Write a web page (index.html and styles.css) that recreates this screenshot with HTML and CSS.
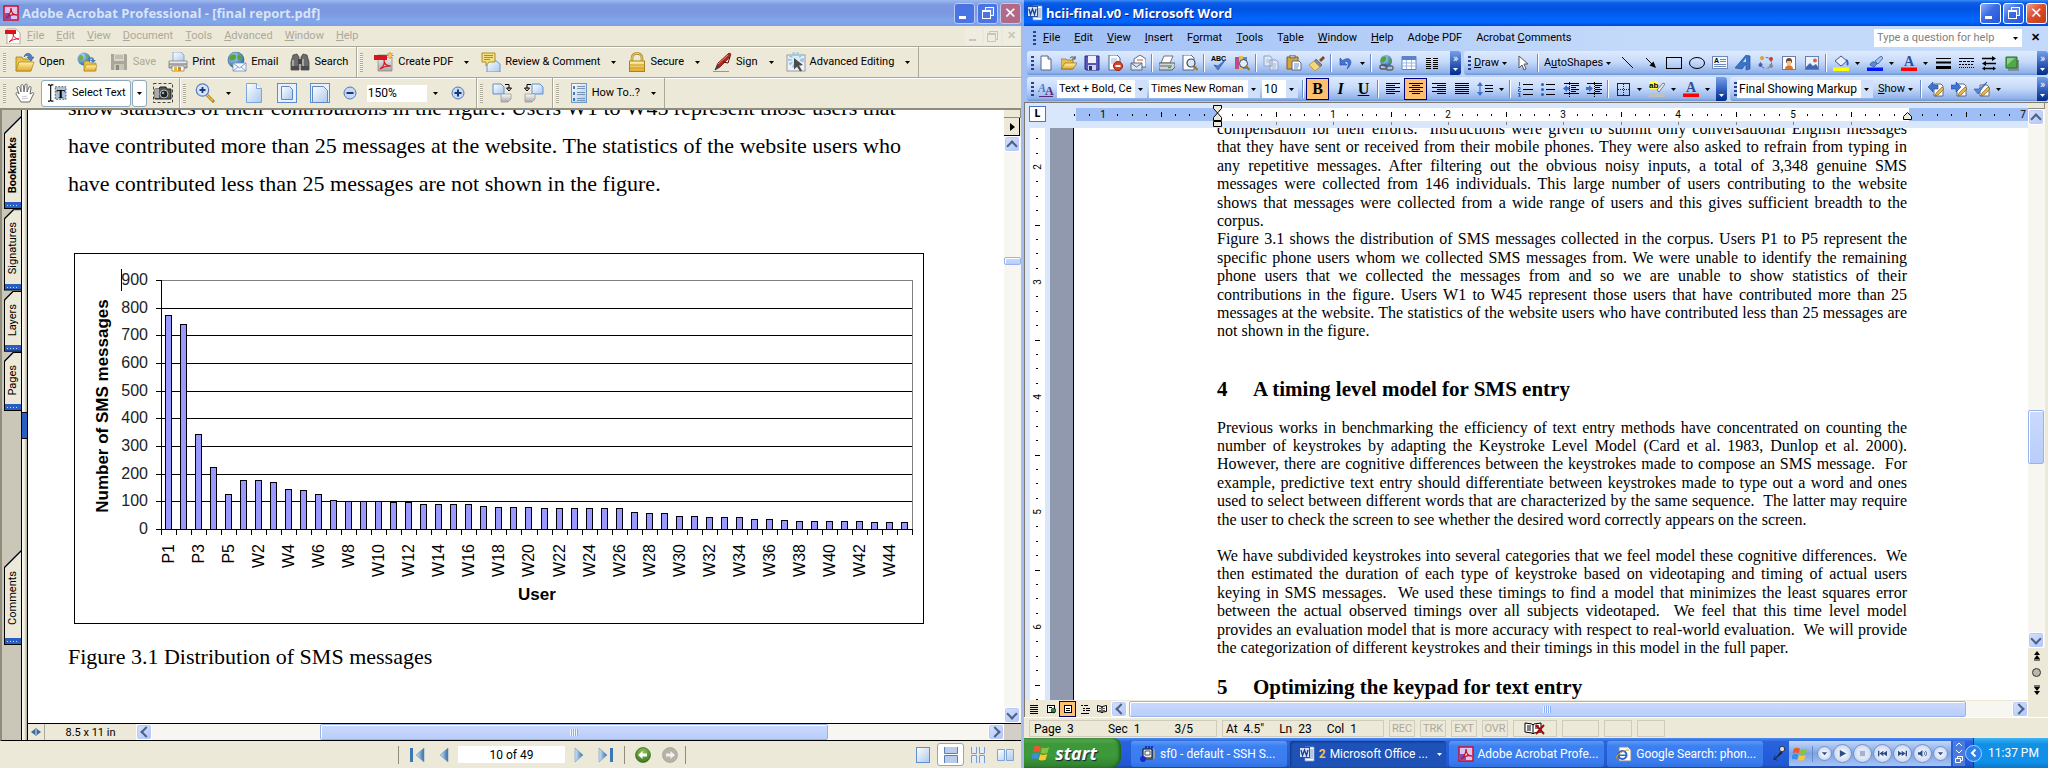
FILE: index.html
```html
<!DOCTYPE html>
<html lang="en">
<head>
<meta charset="utf-8">
<meta name="viewport" content="width=device-width, initial-scale=1.0">
<title>Desktop</title>
<link rel="stylesheet" href="styles.css">
</head>
<body>

<!-- gradients used by the icons -->
<svg class="gradients" aria-hidden="true">
<defs>
<linearGradient id="gy" x1="0" y1="0" x2="0" y2="1"><stop offset="0" stop-color="#fff3a8"/><stop offset="1" stop-color="#e0a92a"/></linearGradient>
<linearGradient id="gb" x1="0" y1="0" x2="1" y2="1"><stop offset="0" stop-color="#ffffff"/><stop offset="1" stop-color="#a9c8ee"/></linearGradient>
<linearGradient id="gg" x1="0" y1="0" x2="0" y2="1"><stop offset="0" stop-color="#fafafa"/><stop offset="1" stop-color="#a8a8a8"/></linearGradient>
<linearGradient id="gn" x1="0" y1="0" x2="1" y2="0"><stop offset="0" stop-color="#d7e9f8"/><stop offset="1" stop-color="#2f6cab"/></linearGradient>
<radialGradient id="gl" cx=".35" cy=".3" r=".8"><stop offset="0" stop-color="#b9dcf8"/><stop offset="1" stop-color="#1d5bab"/></radialGradient>
<radialGradient id="gr" cx=".5" cy=".3" r=".8"><stop offset="0" stop-color="#8fc45c"/><stop offset="1" stop-color="#2c6a10"/></radialGradient>
</defs>
</svg>

<!-- icon sprite -->
<svg class="sprite" aria-hidden="true">
<symbol id="drop" viewBox="0 0 5 3"><path d="M0 0h5L2.5 3z"/></symbol>
<symbol id="acro" viewBox="0 0 16 16"><rect x="1" y="1" width="14" height="14" fill="#d9c6ee" stroke="#c8102e" stroke-width="1.5"/><path d="M2 8h6v6H2z" fill="#7a4fc0"/><path d="M3 13c4-3 5-7 5-10 0 4 2 7 6 7-4-1-8 0-11 3z" fill="#fff" stroke="#c8102e" stroke-width="1.3"/></symbol>
<symbol id="pdf" viewBox="0 0 16 16"><path d="M2 1h9l4 4v11H2z" fill="#fff" stroke="#8d8d8d" stroke-width=".7"/><path d="M0 2h11v4H0z" fill="#d8141c"/><path d="M4 14c4-3 5-6 4-9 0 4 3 6 6 6-4-.5-7 1-10 3z" fill="none" stroke="#d8141c"/></symbol>
<symbol id="folder" viewBox="0 0 20 20"><path d="M1 5h6l1 2h8v12H1z" fill="#e9c447" stroke="#a47c18" stroke-width=".8"/><path d="M4 10h15l-3 9H1z" fill="url(#gy)" stroke="#b58a20" stroke-width=".8"/><path d="M9 5c1-5 7-5 8 0h2l-3 4-4-4h2c-1-2-3-2-5 0z" fill="#4a7fc4" stroke="#24518f" stroke-width=".5"/></symbol>
<symbol id="webopen" viewBox="0 0 20 20"><circle cx="7" cy="7" r="6.5" fill="url(#gl)"/><path d="M3 3c3 0 4 2 3 4s-3 2-4 1 0-4 1-5zM8 2l4 2-2 3z" fill="#6fb04a"/><path d="M7 9h5l1 2h6v8H7z" fill="#e9c447" stroke="#a47c18" stroke-width=".6"/><path d="M9 13h11l-2 6H7z" fill="url(#gy)" stroke="#b58a20" stroke-width=".6"/><path d="M12 7c2-3 5-2 5 1h2l-3 3-3-3h2c0-1-1-2-3-1z" fill="#4a7fc4"/></symbol>
<symbol id="savegray" viewBox="0 0 20 20"><path d="M2 2h15l1 1v15H2z" fill="#a9a69a"/><path d="M5 2h10v7H5z" fill="#dad7c9"/><path d="M5 12h10v6H5z" fill="#c8c5b7"/><path d="M7 13h3v5H7z" fill="#8d8a80"/><path d="M6 4h8M6 6h8" stroke="#a9a69a"/></symbol>
<symbol id="print" viewBox="0 0 20 20"><path d="M5 0h8l3 3v7H5z" fill="url(#gb)" stroke="#6c8fc0" stroke-width=".7"/><path d="M1 9h18v7H1z" fill="url(#gg)" stroke="#6e6e6e" stroke-width=".7"/><path d="M1 12h18" stroke="#777"/><path d="M4 14h12v5H4z" fill="#fff" stroke="#777" stroke-width=".7"/><path d="M6 15h3v4H6z" fill="#f0b429"/><path d="M10 15h3v4h-3z" fill="#d8881e"/></symbol>
<symbol id="email" viewBox="0 0 20 20"><circle cx="9" cy="8" r="8" fill="url(#gl)" stroke="#1b4d8f" stroke-width=".5"/><path d="M4 3c4-2 6 0 5 3S5 9 3 8s0-4 1-5zM11 2l4 3-2 4-3-3zM4 11l4 1-1 4z" fill="#58a53d"/><path d="M6 11h13v8H6z" fill="#f3f8ff" stroke="#6c8fc0" stroke-width=".8"/><path d="M6 11l6.5 5 6.5-5M6 19l5-4M19 19l-5-4" fill="none" stroke="#6c8fc0" stroke-width=".8"/></symbol>
<symbol id="binoc" viewBox="0 0 20 20"><path d="M3 3l4-1 2 3v13H1v-8zM17 3l-4-1-2 3v13h8v-8z" fill="#6c6c6c" stroke="#3a3a3a" stroke-width=".7"/><path d="M8 7h4v5H8z" fill="#444"/><path d="M3 8v8M13 7v9" stroke="#bbb" stroke-width="1.5"/><path d="M1 14h8v4H1zM11 14h8v4h-8z" fill="#4b4b4b"/></symbol>
<symbol id="createpdf" viewBox="0 0 20 20"><path d="M4 3h11l3 3v13H4z" fill="url(#gg)" stroke="#8d8d8d" stroke-width=".8"/><path d="M0 3h13v5H0z" fill="#d8141c"/><path d="M6 17c4-3 5-6 4-9 0 4 3 6 7 6-5 0-8 1-11 3z" fill="none" stroke="#d8141c" stroke-width="1.2"/><path d="M16 0v7M12.5 3.5h7M13.5 1l5 5M18.5 1l-5 5" stroke="#e0701c"/><circle cx="16" cy="3.5" r="1.5" fill="#ffd34a"/></symbol>
<symbol id="review" viewBox="0 0 20 20"><path d="M6 8h8l5 4v8H6z" fill="url(#gb)" stroke="#6c9ad0"/><path d="M1 1h13v9H8l-3 4v-4H1z" fill="#f3df7e" stroke="#a98f2f"/><path d="M3 3.5h9M3 5.5h9M3 7.5h6" stroke="#a98f2f"/></symbol>
<symbol id="lock" viewBox="0 0 16 20"><path d="M3 10V6c0-6 10-6 10 0v4" fill="none" stroke="#a8841c" stroke-width="2.6"/><path d="M3 10V6c0-6 10-6 10 0v4" fill="none" stroke="#ecd06a" stroke-width="1.2"/><rect x=".5" y="9" width="15" height="10.5" fill="url(#gy)" stroke="#a8841c"/><path d="M1 13h14M1 16h14" stroke="#c99a1e"/></symbol>
<symbol id="pen" viewBox="0 0 20 20"><path d="M1 19.5h16" stroke="#9a968a"/><path d="M3 18l3-7L17 1l2 1-1 3L8 15z" fill="#b8261c" stroke="#5a0d08" stroke-width=".7"/><path d="M6 12L16 3" stroke="#ef8a70"/><path d="M3 18l2-5 3 2z" fill="#444"/><path d="M11 10l5 1 2-6" fill="none" stroke="#5a0d08"/></symbol>
<symbol id="advedit" viewBox="0 0 20 20"><rect x="1" y="3" width="18" height="16" fill="#eef3f9" stroke="#9a9a9a"/><circle cx="10" cy="8" r="6" fill="none" stroke="#9cc8e6" stroke-width="4" stroke-dasharray="2 1.5"/><circle cx="10" cy="8" r="4" fill="#d9ecf8"/><path d="M8 6l9 7-4 .5 3 5-2 1-3-5-3 3z" fill="#4c4c4c"/></symbol>
<symbol id="hand" viewBox="0 0 20 20"><path d="M6 19l-5-8c0-2 2-2 3 0L2 5c0-2 2-2 3 0l1 4 0-6c0-2 2-2 2.5 0L9 9l1-7c.5-2 2.5-1 2 0v7l2-5c1-1 2.5-.5 2 1l-1 6 2-1c1-1 2.5 0 1.5 1l-4 8z" fill="#fff" stroke="#6a6a6a"/><path d="M7 14l5-1M7 16l6-1" stroke="#c8c8c8"/></symbol>
<symbol id="seltext" viewBox="0 0 22 20"><path d="M1 1h2l1 1 1-1h2M4 2v16M1 19h2l1-1 1 1h2" fill="none" stroke="#000" stroke-width="1.2"/><rect x="9" y="3" width="12" height="14" fill="#a9c3d8" stroke="#333" stroke-dasharray="2 1.5" stroke-width=".8"/><text x="10.5" y="15" font-family="Liberation Serif" font-weight="bold" font-size="14">T</text></symbol>
<symbol id="camera" viewBox="0 0 20 20"><rect x=".5" y=".5" width="19" height="19" fill="none" stroke="#444" stroke-dasharray="3 2"/><path d="M2 6h4l1-2h6l1 2h4v10H2z" fill="#555" stroke="#222"/><path d="M2 6h4v9H2z" fill="#aaa"/><circle cx="11" cy="11" r="4" fill="#222" stroke="#bbb"/><circle cx="10" cy="10" r="1.3" fill="#8ab"/></symbol>
<symbol id="zoomin" viewBox="0 0 20 20"><path d="M12 12l7 7" stroke="#a8750e" stroke-width="3"/><path d="M12 12l6 6" stroke="#f3c94a" stroke-width="1.3"/><circle cx="7.5" cy="7" r="6.2" fill="#d6e6fa" stroke="#5a80c0" stroke-width="1.3"/><path d="M4.5 7h6M7.5 4v6" stroke="#16387c" stroke-width="1.8"/></symbol>
<symbol id="page" viewBox="0 0 20 20"><path d="M2.5.5h10l5 5v14h-15z" fill="url(#gb)" stroke="#7fa5d6"/><path d="M12.5.5v5h5" fill="#fff" stroke="#7fa5d6"/></symbol>
<symbol id="fitpage" viewBox="0 0 20 20"><rect x=".5" y=".5" width="19" height="19" fill="#e8f1fc" stroke="#5c8fcf"/><path d="M4.5 3.5h8l3 3v10h-11z" fill="url(#gb)" stroke="#6088bd"/></symbol>
<symbol id="fitwidth" viewBox="0 0 20 20"><rect x=".5" y=".5" width="19" height="19" fill="#e8f1fc" stroke="#5c8fcf"/><path d="M2.5 3.5h11l4 4v12h-15z" fill="url(#gb)" stroke="#6088bd"/></symbol>
<symbol id="minus" viewBox="0 0 14 14"><circle cx="7" cy="7" r="6" fill="#c5d8f4" stroke="#5a78b4"/><path d="M3.5 7h7" stroke="#16387c" stroke-width="2"/></symbol>
<symbol id="plus" viewBox="0 0 14 14"><circle cx="7" cy="7" r="6" fill="#c5d8f4" stroke="#5a78b4"/><path d="M3.5 7h7M7 3.5v7" stroke="#16387c" stroke-width="2"/></symbol>
<symbol id="rotcw" viewBox="0 0 20 20"><path d="M1 1h8l3 3v7H1z" fill="url(#gb)" stroke="#5c8fcf"/><path d="M9 11h10v5l-3 3H9z" fill="url(#gg)" stroke="#999" stroke-width=".8"/><path d="M13 1.5h4v4M14.5 5h5L17 8z" fill="none" stroke="#000"/></symbol>
<symbol id="rotccw" viewBox="0 0 20 20"><path d="M8 1h8l3 3v7H8z" fill="url(#gb)" stroke="#5c8fcf"/><path d="M1 11h10v5l-3 3H1z" fill="url(#gg)" stroke="#999" stroke-width=".8"/><path d="M7 1.5H3v4M.5 5h5L3 8z" fill="none" stroke="#000"/></symbol>
<symbol id="howto" viewBox="0 0 16 20"><rect x=".5" y=".5" width="15" height="19" fill="url(#gb)" stroke="#6c9ad0"/><path d="M6 3.5h8M6 5.5h8M6 9.5h8M6 11.5h8M6 15.5h8M6 17.5h8" stroke="#7c94b4"/><path d="M3 3v3M3 9v3M3 15v3" stroke="#1c4fa0" stroke-width="1.5"/></symbol>
<symbol id="first" viewBox="0 0 16 16"><path d="M1 1h3v14H1z" fill="#3b78b5"/><path d="M15 1v14L7 8z" fill="url(#gn)" stroke="#6a97c4" stroke-width=".6"/></symbol>
<symbol id="prev" viewBox="0 0 10 16"><path d="M9 1v14L1 8z" fill="url(#gn)" stroke="#6a97c4" stroke-width=".6"/></symbol>
<symbol id="next" viewBox="0 0 10 16"><path d="M1 1v14l8-7z" fill="url(#gn)" stroke="#6a97c4" stroke-width=".6"/></symbol>
<symbol id="last" viewBox="0 0 16 16"><path d="M12 1h3v14h-3z" fill="#3b78b5"/><path d="M1 1v14l8-7z" fill="url(#gn)" stroke="#6a97c4" stroke-width=".6"/></symbol>
<symbol id="goback" viewBox="0 0 16 16"><circle cx="8" cy="8" r="7.5" fill="url(#gr)" stroke="#2c5a14" stroke-width=".6"/><path d="M3 8l4.5-4v2.5H12v3H7.5V12z" fill="#fff"/></symbol>
<symbol id="gofwd" viewBox="0 0 16 16"><circle cx="8" cy="8" r="7.5" fill="#b5b3a8" stroke="#99968b" stroke-width=".6"/><path d="M13 8L8.5 4v2.5H4v3h4.5V12z" fill="#f2f1ea"/></symbol>
<symbol id="lay1" viewBox="0 0 14 16"><rect x=".5" y=".5" width="13" height="15" fill="url(#gb)" stroke="#5c8fcf"/></symbol>
<symbol id="lay2" viewBox="0 0 14 16"><path d="M.5 0v6.5h13V0M.5 16V8.5h13V16" fill="#b9cdea" stroke="#5c7fb4"/></symbol>
<symbol id="lay3" viewBox="0 0 14 16"><path d="M.5 0v6.5h5V0M8.5 0v6.5h5V0M.5 16V8.5h5V16M8.5 16V8.5h5V16" fill="#e3edf9" stroke="#7c9ccc"/></symbol>
<symbol id="lay4" viewBox="0 0 17 12"><path d="M.5.5h7v11h-7zM9.5.5h7v11h-7z" fill="url(#gb)" stroke="#7fa5d6"/></symbol>

<symbol id="w" viewBox="0 0 16 16"><path d="M6 1h9v14H6z" fill="#fff" stroke="#7f9fd0" stroke-width=".8"/><path d="M11 4h3M11 6h3M11 8h3M11 10h3M7 12h7" stroke="#4a6cb0" stroke-width=".8"/><rect x=".5" y="1.5" width="10" height="10" fill="#d6e3fa" stroke="#2a4f9e"/><path d="M2 4l1.5 5.5L5.5 4l2 5.5L9 4" fill="none" stroke="#1c3f94" stroke-width="1.3"/></symbol>
<symbol id="new" viewBox="0 0 16 16"><path d="M3 1h7l3 3v11H3z" fill="#fff" stroke="#54678c"/><path d="M10 1v3h3" fill="#cfe0f8" stroke="#54678c"/></symbol>
<symbol id="open" viewBox="0 0 16 16"><path d="M0 4h5l1 1h6v9H0z" fill="#e8c04c" stroke="#8d6c17" stroke-width=".7"/><path d="M4 8h12l-4 6H0z" fill="url(#gy)" stroke="#8d6c17" stroke-width=".7"/><path d="M9 3c2-2 4-1 5 1M14 1v3h-3" fill="none" stroke="#445"/></symbol>
<symbol id="save" viewBox="0 0 16 16"><path d="M1 1h14v14H2l-1-1z" fill="#5558b8" stroke="#2a2c7c"/><path d="M4 1h8v7H4z" fill="#eef0fc"/><path d="M4 10h8v5H4z" fill="#cfd1ee"/><path d="M5 11h3v4H5z" fill="#2a2c7c"/></symbol>
<symbol id="perm" viewBox="0 0 16 16"><path d="M2 0h8l3 3v12H2z" fill="#fff" stroke="#54678c"/><path d="M4 4h6M4 6h6M4 8h4" stroke="#9fb4d8"/><circle cx="11" cy="11" r="4.5" fill="#dd4326" stroke="#96240f"/><path d="M8.5 11h5" stroke="#fff" stroke-width="2"/></symbol>
<symbol id="mail" viewBox="0 0 16 16"><path d="M4 4l6-4 6 4v8H4z" fill="#fff" stroke="#5d6b84"/><path d="M1 8h11v7H1z" fill="#dde7f6" stroke="#5d6b84"/><path d="M1 8l5.5 4L12 8" fill="none" stroke="#5d6b84"/><path d="M7 5h6" stroke="#d05030"/></symbol>
<symbol id="print16" viewBox="0 0 16 16"><path d="M5 1h9l-3 7H2z" fill="#fff" stroke="#555" stroke-width=".8"/><path d="M0 8h16v4l-3 3H0z" fill="#cfd3da" stroke="#444" stroke-width=".8"/><path d="M1 11h12" stroke="#666"/><path d="M9 12.5h3" stroke="#2eb82e" stroke-width="1.5"/></symbol>
<symbol id="preview" viewBox="0 0 16 16"><path d="M1 0h8l3 3v12H1z" fill="#fff" stroke="#54678c"/><circle cx="9" cy="8" r="4" fill="#d3e8f8" stroke="#445" stroke-width="1.2"/><path d="M12 11l3.5 4" stroke="#a8750e" stroke-width="2"/></symbol>
<symbol id="spell" viewBox="0 0 16 16"><text x="0" y="6" font-family="Liberation Sans" font-weight="bold" font-size="7">ABC</text><path d="M3 10l4 5 8-11-8 7z" fill="#4a7fd8" stroke="#2a56a8" stroke-width=".7"/></symbol>
<symbol id="research" viewBox="0 0 16 16"><path d="M1 2h4v12H1z" fill="#c04a8c"/><path d="M5 1h4v13H5z" fill="#e0c050"/><path d="M9 2h4v12H9z" fill="#5b8ad0"/><circle cx="9.5" cy="8.5" r="4" fill="#dfeefa" stroke="#445"/><path d="M12 11l3.5 4" stroke="#a8750e" stroke-width="2"/></symbol>
<symbol id="copy" viewBox="0 0 16 16"><path d="M1 1h6l2 2v8H1zM7 5h6l2 2v8H7z" fill="#dfe7f4" stroke="#8fa3c6"/><path d="M3 5h4M3 7h4M9 9h4M9 11h4M9 13h4" stroke="#a9b8d4"/></symbol>
<symbol id="paste" viewBox="0 0 16 16"><path d="M1 2h11v12H1z" fill="#d8a440" stroke="#7c5a14"/><path d="M4 0h5v3H4z" fill="#bbb" stroke="#555" stroke-width=".7"/><path d="M6 6h7l2 2v7H6z" fill="#fff" stroke="#54678c"/><path d="M8 9h5M8 11h5M8 13h4" stroke="#6a8ac4"/></symbol>
<symbol id="brush" viewBox="0 0 16 16"><path d="M10 5l4-4 2 2-4 4z" fill="#7c4a1c"/><path d="M7 4l6 6-2 2-6-5z" fill="#888" stroke="#444" stroke-width=".6"/><path d="M5 6l6 6-5 4-6-6z" fill="#f2d778" stroke="#a8842c" stroke-width=".7"/></symbol>
<symbol id="undo" viewBox="0 0 16 16"><path d="M2 3v7h7L6.5 7.5C9 5 12 8 9 14c7-6 4-14-4.5-8.5z" fill="#4576d8" stroke="#24489c" stroke-width=".6"/></symbol>
<symbol id="link" viewBox="0 0 16 16"><circle cx="8" cy="6" r="6" fill="url(#gl)"/><path d="M4 2c4-2 5 1 4 3S4 8 3 7s0-4 1-5zM10 3l4 3-2 3z" fill="#4ca636"/><rect x="2" y="10" width="7" height="4" rx="2" fill="none" stroke="#555" stroke-width="1.4"/><rect x="8" y="11" width="7" height="4" rx="2" fill="none" stroke="#666" stroke-width="1.4"/></symbol>
<symbol id="table" viewBox="0 0 16 16"><path d="M1 1.5h14v13H1z" fill="#fff" stroke="#5d83c4"/><path d="M1 2h14v3H1z" fill="#5d83c4"/><path d="M5.5 5v9M10.5 5v9M1 8h14M1 11h14" stroke="#9db8e2"/></symbol>
<symbol id="columns" viewBox="0 0 16 16"><path d="M2 3.5h5M2 5.5h5M2 7.5h5M2 9.5h5M2 11.5h5M2 13.5h5M9 3.5h5M9 5.5h5M9 7.5h5M9 9.5h5M9 11.5h5M9 13.5h5" stroke="#000"/></symbol>
<symbol id="ptr" viewBox="0 0 16 16"><path d="M4 1v12l3-3 2 5 2-1-2-5h4z" fill="#fff" stroke="#555"/></symbol>
<symbol id="line" viewBox="0 0 16 16"><path d="M2 2l11 11" stroke="#000"/></symbol>
<symbol id="arrow" viewBox="0 0 16 16"><path d="M3 3l6 6" stroke="#000"/><path d="M13 13L6.5 10.5l4-4z"/></symbol>
<symbol id="rect" viewBox="0 0 16 16"><rect x=".5" y="2.5" width="15" height="11" fill="none" stroke="#000"/></symbol>
<symbol id="oval" viewBox="0 0 16 16"><ellipse cx="8" cy="8" rx="7.5" ry="5.5" fill="none" stroke="#000"/></symbol>
<symbol id="tbox" viewBox="0 0 16 16"><rect x=".5" y="1.5" width="15" height="12" fill="#f4f8ff" stroke="#6d87b8"/><text x="2" y="8" font-family="Liberation Sans" font-weight="bold" font-size="7">A</text><path d="M8 4.5h6M8 6.5h6M2 9.5h12M2 11.5h12" stroke="#6d87b8"/></symbol>
<symbol id="wordart" viewBox="0 0 16 16"><path d="M0 13L11 0l4 1v13l-4 1V9l-4 5z" fill="#3a73c8" stroke="#1f4a94" stroke-width=".6"/><path d="M8 7l3-4v4z" fill="#cfe0f8"/></symbol>
<symbol id="diagram" viewBox="0 0 16 16"><circle cx="8" cy="8" r="5.5" fill="none" stroke="#667" stroke-dasharray="3 2"/><circle cx="4" cy="3" r="2" fill="#e0a030"/><circle cx="13" cy="4" r="2" fill="#c04030"/><circle cx="2.5" cy="10" r="2" fill="#4a5ab0"/><circle cx="13" cy="11" r="2" fill="#888"/><circle cx="8" cy="14" r="1.8" fill="#a9b8e0"/></symbol>
<symbol id="clip" viewBox="0 0 16 16"><rect x="1.5" y="1.5" width="13" height="13" fill="#fff" stroke="#667ea8"/><circle cx="8" cy="6" r="3" fill="#6b4a2a"/><path d="M6 6h4v4H6z" fill="#f0c090"/><path d="M4 14c0-5 8-5 8 0z" fill="#d8772c"/></symbol>
<symbol id="pic" viewBox="0 0 16 16"><rect x="1.5" y="1.5" width="13" height="13" fill="#eaf2ff" stroke="#667ea8"/><path d="M2 12l4-4 3 3 3-2 2 3v2H2z" fill="#3f67b0"/><circle cx="11" cy="5.5" r="2" fill="#e0623c"/></symbol>
<symbol id="fill" viewBox="0 0 16 16"><path d="M2 6l6-5 6 5-6 5z" fill="#e6eefb" stroke="#4a5a7c"/><path d="M13 5c2 1 2 4 1 5" fill="none" stroke="#2a63c8" stroke-width="2"/><path d="M0 12.5h16V16H0z" fill="#ffff00"/></symbol>
<symbol id="linecol" viewBox="0 0 16 16"><path d="M8 6l6-5 2 2-5 6z" fill="#a8c4ee" stroke="#345a9c" stroke-width=".8"/><path d="M3 10c1-4 5-4 7-1l-3 3z" fill="#5d8ad4" stroke="#345a9c" stroke-width=".8"/><path d="M0 12.5h16V16H0z" fill="#0018ff"/></symbol>
<symbol id="fontcol" viewBox="0 0 16 16"><text x="3" y="11" font-family="Liberation Serif" font-weight="bold" font-size="14" fill="#2c4f9c">A</text><path d="M0 12.5h16V16H0z" fill="#ff0000"/></symbol>
<symbol id="lstyle" viewBox="0 0 16 16"><path d="M1 3.5h15" stroke="#000"/><path d="M1 7.5h15" stroke="#000" stroke-width="2"/><path d="M1 12.5h15" stroke="#000" stroke-width="3"/></symbol>
<symbol id="ldash" viewBox="0 0 16 16"><path d="M1 3.5h15" stroke="#000"/><path d="M1 6.5h15" stroke="#000" stroke-dasharray="3 1"/><path d="M1 9.5h15" stroke="#000" stroke-dasharray="2 1"/><path d="M1 12.5h15" stroke="#000" stroke-dasharray="1 1"/></symbol>
<symbol id="larrow" viewBox="0 0 16 16"><path d="M1 3.5h11M4 8.5h11M3 13.5h10" stroke="#000" stroke-width="1.3"/><path d="M11 1l4 2.5-4 2.5zM5 6L1 8.5 5 11zM4 11.5L1 13.5l3 2zM12 11.5l3 2-3 2z"/></symbol>
<symbol id="shadow" viewBox="0 0 16 16"><path d="M4 5h11v11H4z" fill="#7f8f9f"/><path d="M2 2h11v11H2z" fill="#4fa84a" stroke="#2c6c2c"/><path d="M3 3h8L3 10z" fill="#8fd08a"/></symbol>
<symbol id="aa" viewBox="0 0 16 16"><text x="0" y="11" font-family="Liberation Serif" font-style="italic" font-weight="bold" font-size="12" fill="#4a78c8">A</text><text x="7" y="14" font-family="Liberation Serif" font-weight="bold" font-size="12" fill="#5a2a7c">A</text><path d="M1 15.5h14" stroke="#5a2a7c"/></symbol>
<symbol id="al" viewBox="0 0 16 16"><path d="M1 2.5h14M1 4.5h9M1 6.5h14M1 8.5h9M1 10.5h14M1 12.5h9" stroke="#000"/></symbol>
<symbol id="ac" viewBox="0 0 16 16"><path d="M1 2.5h14M4 4.5h8M1 6.5h14M4 8.5h8M1 10.5h14M4 12.5h8" stroke="#000"/></symbol>
<symbol id="ar" viewBox="0 0 16 16"><path d="M1 2.5h14M6 4.5h9M1 6.5h14M6 8.5h9M1 10.5h14M6 12.5h9" stroke="#000"/></symbol>
<symbol id="aj" viewBox="0 0 16 16"><path d="M1 2.5h14M1 4.5h14M1 6.5h14M1 8.5h14M1 10.5h14M1 12.5h14" stroke="#000"/></symbol>
<symbol id="lspace" viewBox="0 0 16 16"><path d="M8 4.5h8M8 7.5h8M8 10.5h8" stroke="#000"/><path d="M3 2v12" stroke="#2a5ec0"/><path d="M0 5l3-4 3 4zM0 11l3 4 3-4z" fill="#3a6fd0"/></symbol>
<symbol id="num" viewBox="0 0 16 16"><path d="M6 3.5h10M6 8.5h10M6 13.5h10" stroke="#000"/><path d="M2.5 1v4M1 6.5h2v2H1.5v2H4M1 12.5h2v1H2v1h1v1.5H1" fill="none" stroke="#2a5ec0"/></symbol>
<symbol id="bul" viewBox="0 0 16 16"><path d="M6 3.5h9M6 8.5h9M6 13.5h9" stroke="#000"/><circle cx="2.5" cy="3.5" r="1.5" fill="#2a5ec0"/><circle cx="2.5" cy="8.5" r="1.5" fill="#2a5ec0"/><circle cx="2.5" cy="13.5" r="1.5" fill="#2a5ec0"/></symbol>
<symbol id="outd" viewBox="0 0 16 16"><path d="M1 2.5h15M8 4.5h8M8 6.5h5M8 8.5h8M8 10.5h5M1 12.5h15" stroke="#000"/><path d="M0 7.5L4 4v2h3v3H4v2z" fill="#3a6fd0"/><path d="M6.5 1v15" stroke="#000" stroke-dasharray="1 1"/></symbol>
<symbol id="ind" viewBox="0 0 16 16"><path d="M1 2.5h15M9 4.5h7M9 6.5h5M9 8.5h7M9 10.5h5M1 12.5h15" stroke="#000"/><path d="M7 7.5L3 4v2H0v3h3v2z" fill="#3a6fd0"/><path d="M8.5 1v15" stroke="#000" stroke-dasharray="1 1"/></symbol>
<symbol id="border" viewBox="0 0 16 16"><rect x="2.5" y="2.5" width="12" height="12" fill="none" stroke="#223"/><path d="M8.5 3v11M3 8.5h11" stroke="#223" stroke-dasharray="1 1"/></symbol>
<symbol id="hilite" viewBox="0 0 16 16"><path d="M0 0h9v8H0z" fill="#ffff3c"/><text x="0" y="7" font-family="Liberation Sans" font-weight="bold" font-size="8">ab</text><path d="M8 9l6-7 2 1-6 8z" fill="#eee" stroke="#555" stroke-width=".7"/><path d="M0 12.5h16V16H0z" fill="#c0c0c0"/></symbol>
<symbol id="pchg" viewBox="0 0 16 16"><path d="M6 3h7l2 2v10H6z" fill="#fff" stroke="#667"/><path d="M0 6l5-5v3h5v4H5v3z" fill="#3c74d8" stroke="#1f4a94" stroke-width=".6"/><path d="M7 15l1-3 6-6 2 2-6 6z" fill="#e8b44c" stroke="#7c5a14" stroke-width=".6"/></symbol>
<symbol id="nchg" viewBox="0 0 16 16"><path d="M6 3h7l2 2v10H6z" fill="#fff" stroke="#667"/><path d="M10 6L5 1v3H0v4h5v3z" fill="#3c74d8" stroke="#1f4a94" stroke-width=".6"/><path d="M7 15l1-3 6-6 2 2-6 6z" fill="#e8b44c" stroke="#7c5a14" stroke-width=".6"/></symbol>
<symbol id="accept" viewBox="0 0 16 16"><path d="M6 4h7l2 2v9H6z" fill="#fff" stroke="#667"/><path d="M0 8l4 5 9-12-8 7z" fill="#5a8ae0" stroke="#1f4a94" stroke-width=".6"/><path d="M7 15l1-3 6-6 2 2-6 6z" fill="#e8b44c" stroke="#7c5a14" stroke-width=".6"/></symbol>
<symbol id="v1" viewBox="0 0 10 10"><path d="M1 1.5h8M1 3.5h8M1 5.5h8M1 7.5h8M1 9.5h8" stroke="#000"/></symbol>
<symbol id="v2" viewBox="0 0 10 10"><rect x="1.5" y="1.5" width="7" height="7" fill="#fff" stroke="#000"/><path d="M3 3.5h3" stroke="#000"/><circle cx="7.5" cy="6.5" r="2.3" fill="#2a8a3c" stroke="#000" stroke-width=".6"/></symbol>
<symbol id="v3" viewBox="0 0 10 10"><rect x="1.5" y="1.5" width="7" height="7" fill="#fff" stroke="#000"/><path d="M3 4.5h4M3 6.5h4" stroke="#000"/></symbol>
<symbol id="v4" viewBox="0 0 10 10"><path d="M1 1.5h2M4 1.5h4M3 4.5h2M6 4.5h4M3 6.5h2M6 6.5h4M1 9.5h8" stroke="#000"/></symbol>
<symbol id="v5" viewBox="0 0 10 10"><path d="M5 2v7M.5 1.5l4 1 .5 1 .5-1 4-1v6l-4 .5-.5 1-.5-1-4-.5z" fill="#fff" stroke="#000"/><path d="M2 4.5h2M6 4.5h2M2 6.5h2M6 6.5h2" stroke="#000" stroke-width=".7"/></symbol>
<symbol id="prevpg" viewBox="0 0 10 10"><path d="M5 0l3 4H2zM5 4l3 4H2zM2 8.5h6v1H2z"/></symbol>
<symbol id="nextpg" viewBox="0 0 10 10"><path d="M2 .5h6v1H2zM2 2h6L5 6zM2 6h6l-3 4z"/></symbol>
<symbol id="resize" viewBox="0 0 10 8"><path d="M0 4l4-3v6zM10 4L6 1v6z" fill="#3b6a9c"/><path d="M5 0v8" stroke="#3b6a9c"/></symbol>
<symbol id="right" viewBox="0 0 6 8"><path d="M1 0l5 4-5 4z"/></symbol>
<symbol id="book" viewBox="0 0 22 14"><path d="M1 1l7 1 1 1 1-1 7-1v9l-7 1-1 1-1-1-7-1z" fill="#fff" stroke="#000"/><path d="M9 3v8M3 4h4M3 6h4M3 8h4M11 4h4M11 6h4" stroke="#000"/><path d="M12 3l8 9M20 3l-8 9" stroke="#a00c0c" stroke-width="2"/></symbol>
<symbol id="flag" viewBox="0 0 18 18"><path d="M2 3c3-2 5-1 7 0L7.5 8.5C5 7 3 7 .8 8.5z" fill="#f1562a"/><path d="M10 3.5c2 1 4 1 7-.5l-1.5 6c-3 1-5 1-7 0z" fill="#86c440"/><path d="M.5 9.8c3-1.5 5-1 6.7 0L5.7 15.5C4 14.5 2 14-1 15.5z" fill="#3b8ee8"/><path d="M8.2 10.3c2 1 4 1 7-.3l-1.6 5.7c-3 1-5 1-7 0z" fill="#fdc82e"/></symbol>
<symbol id="ssh" viewBox="0 0 16 16"><path d="M3 3h9v9H3z" fill="#eee" stroke="#000"/><path d="M5 5h5v4H5z" fill="#fff" stroke="#555"/><path d="M13 2l2 2v8l-2 2z" fill="#999"/><path d="M4 13h9" stroke="#555" stroke-width="2"/><circle cx="3" cy="13" r="3" fill="#1a2ad0"/><path d="M5 1h8" stroke="#1a2ad0" stroke-width="2" stroke-dasharray="2 1"/></symbol>
<symbol id="ie" viewBox="0 0 16 16"><path d="M3 1h9l3 3v11H3z" fill="#fff" stroke="#888"/><circle cx="6.5" cy="9" r="4" fill="none" stroke="#2a66cc" stroke-width="2"/><path d="M3 9.3h7" stroke="#2a66cc" stroke-width="1.5"/><path d="M0 13C-1 10 8 3 13 4" fill="none" stroke="#e0a020"/></symbol>
<symbol id="mic" viewBox="0 0 14 18"><path d="M2 16l7-9 2 2-9 8z" fill="#222"/><circle cx="10.5" cy="4.5" r="3" fill="#ddd" stroke="#222"/><path d="M3 12l-2 4 4 1" fill="none" stroke="#222"/></symbol>
<symbol id="p-menu" viewBox="0 0 10 10"><path d="M2 3.5h6L5 7z"/></symbol>
<symbol id="p-play" viewBox="0 0 10 10"><path d="M2 1l7 4-7 4z"/></symbol>
<symbol id="p-stop" viewBox="0 0 10 10"><path d="M2 2h6v6H2z"/></symbol>
<symbol id="p-prev" viewBox="0 0 10 10"><path d="M0 2h1.5v6H0zM1.5 5L6 2v6zM5.5 5L10 2v6z"/></symbol>
<symbol id="p-next" viewBox="0 0 10 10"><path d="M8.5 2H10v6H8.5zM8.5 5L4 2v6zM4.5 5L0 2v6z"/></symbol>
<symbol id="p-vol" viewBox="0 0 10 10"><path d="M0 3.5h2L5 1v8L2 6.5H0z"/><path d="M6.5 3c1 1 1 3 0 4M8 2c2 2 2 4 0 6" fill="none" stroke="#2c4c84"/></symbol>
<symbol id="band" viewBox="0 0 10 24"><path d="M2 5l3-3 3 3M2 9l3 3 3-3M1.5 17.5h5v4h-5zM3.5 17v-1.5h5v4H7" fill="none" stroke="#fff"/></symbol>
<symbol id="chev" viewBox="0 0 10 10"><path d="M6.5 1.5L3 5l3.5 3.5" fill="none" stroke="#fff" stroke-width="2"/></symbol>
</svg>

<!-- ======== Acrobat ======== -->
<section class="window acrobat">
	<header class="titlebar inactive">
		<svg class="i16"><use href="#acro"/></svg>
		<h1>Adobe Acrobat Professional - [final report.pdf]</h1>
		<div class="winbtns">
			<button class="winbtn min" title="Minimize"></button>
			<button class="winbtn restore" title="Restore"></button>
			<button class="winbtn close" title="Close">&#10005;</button>
		</div>
	</header>
	<nav class="menubar gray">
		<svg class="i16"><use href="#pdf"/></svg>
		<button><u>F</u>ile</button><button><u>E</u>dit</button><button><u>V</u>iew</button><button><u>D</u>ocument</button><button><u>T</u>ools</button><button><u>A</u>dvanced</button><button><u>W</u>indow</button><button><u>H</u>elp</button>
		<div class="mdi">
			<button class="mdibtn min" title="Minimize document"></button>
			<button class="mdibtn restore" title="Restore document"></button>
			<button class="mdibtn close" title="Close document">&#10005;</button>
		</div>
	</nav>
	<div class="arow">
		<div class="agroup">
			<button><svg class="i20"><use href="#folder"/></svg>Open</button>
			<button title="Open web page"><svg class="i20"><use href="#webopen"/></svg></button>
			<button class="off" disabled><svg class="i20"><use href="#savegray"/></svg>Save</button>
			<button><svg class="i20"><use href="#print"/></svg>Print</button>
			<button><svg class="i20"><use href="#email"/></svg>Email</button>
			<button><svg class="i20"><use href="#binoc"/></svg>Search</button>
		</div>
		<div class="agroup menus">
			<button><svg class="i20"><use href="#createpdf"/></svg>Create PDF<svg class="drop"><use href="#drop"/></svg></button>
			<button><svg class="i20"><use href="#review"/></svg>Review &amp; Comment<svg class="drop"><use href="#drop"/></svg></button>
			<button><svg class="i20 thin"><use href="#lock"/></svg>Secure<svg class="drop"><use href="#drop"/></svg></button>
			<button><svg class="i20"><use href="#pen"/></svg>Sign<svg class="drop"><use href="#drop"/></svg></button>
			<button><svg class="i20"><use href="#advedit"/></svg>Advanced Editing<svg class="drop"><use href="#drop"/></svg></button>
		</div>
	</div>
	<div class="arow second">
		<div class="agroup tight">
			<button title="Hand"><svg class="i20"><use href="#hand"/></svg></button>
			<span class="split"><button class="on"><svg class="i22"><use href="#seltext"/></svg>Select Text</button><button class="on" title="More select tools"><svg class="drop"><use href="#drop"/></svg></button></span>
			<button title="Snapshot"><svg class="i20"><use href="#camera"/></svg></button>
		</div>
		<div class="agroup zooms">
			<button title="Zoom in"><svg class="i20"><use href="#zoomin"/></svg><svg class="drop"><use href="#drop"/></svg></button>
			<button title="Actual size"><svg class="i20"><use href="#page"/></svg></button>
			<button title="Fit page"><svg class="i20"><use href="#fitpage"/></svg></button>
			<button title="Fit width"><svg class="i20"><use href="#fitwidth"/></svg></button>
			<span class="zoombox">
				<button title="Zoom out"><svg class="i14"><use href="#minus"/></svg></button>
				<input type="text" value="150%" aria-label="Zoom level">
				<svg class="drop"><use href="#drop"/></svg>
			</span>
			<button title="Zoom in"><svg class="i14"><use href="#plus"/></svg></button>
		</div>
		<div class="agroup">
			<button title="Rotate clockwise"><svg class="i20"><use href="#rotcw"/></svg></button>
			<button title="Rotate counterclockwise"><svg class="i20"><use href="#rotccw"/></svg></button>
		</div>
		<div class="agroup menus">
			<button><svg class="i20 thin"><use href="#howto"/></svg>How To..?<svg class="drop"><use href="#drop"/></svg></button>
		</div>
	</div>
	<main class="amain">
		<div class="tabs">
			<button class="tab big"><b>Bookmarks</b></button>
			<button class="tab"><span>Signatures</span></button>
			<button class="tab"><span>Layers</span></button>
			<button class="tab"><span>Pages</span></button>
			<button class="tab big end"><span>Comments</span></button>
		</div>
		<div class="splitter"><i></i></div>
		<div class="apane">
			<article class="pdf">
				<p>show statistics of their contributions in the figure. Users W1 to W45 represent those users that<br>
				have contributed more than 25 messages at the website. The statistics of the website users who<br>
				have contributed less than 25 messages are not shown in the figure.</p>
				<figure>
					<svg id="chart" width="850" height="371" role="img" aria-label="Number of SMS messages by user"></svg>
					<figcaption>Figure 3.1 Distribution of SMS messages</figcaption>
				</figure>
			</article>
			<div class="ahscroll">
				<button class="resize" title="Resize"><svg class="i10 low"><use href="#resize"/></svg></button>
				<span class="pagesize">8.5 x 11 in</span>
				<div class="hscroll"><button class="sb left" title="Scroll left"></button><div class="track"><div class="thumb"></div></div><button class="sb right" title="Scroll right"></button></div>
			</div>
		</div>
		<div class="vcol">
			<div class="vsplit"></div>
			<button class="pagemenu" title="Page menu"><svg class="i10 low"><use href="#right"/></svg></button>
			<div class="vscroll"><button class="sb up" title="Scroll up"></button><div class="track"><div class="thumb"></div></div><button class="sb down" title="Scroll down"></button></div>
			<div class="corner"></div>
		</div>
	</main>
	<footer class="astatus">
		<div class="pager">
			<button title="First page"><svg class="i16"><use href="#first"/></svg></button>
			<button title="Previous page"><svg class="i10"><use href="#prev"/></svg></button>
			<input type="text" value="10 of 49" aria-label="Page">
			<button title="Next page"><svg class="i10"><use href="#next"/></svg></button>
			<button title="Last page"><svg class="i16"><use href="#last"/></svg></button>
		</div>
		<div class="pager history">
			<button title="Previous view"><svg class="i16"><use href="#goback"/></svg></button>
			<button title="Next view"><svg class="i16"><use href="#gofwd"/></svg></button>
		</div>
		<div class="layouts">
			<button title="Single page"><svg class="i14 tall"><use href="#lay1"/></svg></button>
			<button title="Continuous" class="on"><svg class="i14 tall"><use href="#lay2"/></svg></button>
			<button title="Continuous facing"><svg class="i14 tall"><use href="#lay3"/></svg></button>
			<button title="Facing"><svg class="i17"><use href="#lay4"/></svg></button>
		</div>
	</footer>
</section>

<div class="rightside">
<!-- ======== Word ======== -->
<section class="window word">
	<header class="titlebar active">
		<svg class="i16"><use href="#w"/></svg>
		<h1>hcii-final.v0 - Microsoft Word</h1>
		<div class="winbtns">
			<button class="winbtn min" title="Minimize"></button>
			<button class="winbtn restore" title="Restore"></button>
			<button class="winbtn close" title="Close">&#10005;</button>
		</div>
	</header>
	<nav class="menubar">
		<i class="grip"></i>
		<button><u>F</u>ile</button><button><u>E</u>dit</button><button><u>V</u>iew</button><button><u>I</u>nsert</button><button>F<u>o</u>rmat</button><button><u>T</u>ools</button><button>T<u>a</u>ble</button><button><u>W</u>indow</button><button><u>H</u>elp</button><button>Ado<u>b</u>e PDF</button><button>Acrobat <u>C</u>omments</button>
		<div class="ask"><input type="text" placeholder="Type a question for help" aria-label="Type a question for help"><svg class="drop"><use href="#drop"/></svg></div>
		<button class="closedoc" title="Close document">&#10005;</button>
	</nav>
	<div class="wrow">
		<div class="bar">
			<i class="grip"></i>
			<button title="New"><svg class="i16"><use href="#new"/></svg></button>
			<button title="Open"><svg class="i16"><use href="#open"/></svg></button>
			<button title="Save"><svg class="i16"><use href="#save"/></svg></button>
			<button title="Permission"><svg class="i16"><use href="#perm"/></svg></button>
			<button title="E-mail"><svg class="i16"><use href="#mail"/></svg></button>
			<i class="sep"></i>
			<button title="Print"><svg class="i16"><use href="#print16"/></svg></button>
			<button title="Print preview"><svg class="i16"><use href="#preview"/></svg></button>
			<i class="sep"></i>
			<button title="Spelling"><svg class="i16"><use href="#spell"/></svg></button>
			<button title="Research"><svg class="i16"><use href="#research"/></svg></button>
			<i class="sep"></i>
			<button title="Copy"><svg class="i16"><use href="#copy"/></svg></button>
			<button title="Paste"><svg class="i16"><use href="#paste"/></svg></button>
			<button title="Format painter"><svg class="i16"><use href="#brush"/></svg></button>
			<i class="sep"></i>
			<button title="Undo"><svg class="i16"><use href="#undo"/></svg></button>
			<button class="dd" title="Undo list"><svg class="drop"><use href="#drop"/></svg></button>
			<i class="sep"></i>
			<button title="Hyperlink"><svg class="i16"><use href="#link"/></svg></button>
			<button title="Insert table"><svg class="i16"><use href="#table"/></svg></button>
			<button title="Columns"><svg class="i16"><use href="#columns"/></svg></button>
			<button class="over" title="Toolbar options"><span>&raquo;</span><svg class="drop"><use href="#drop"/></svg></button>
		</div>
		<div class="bar grow">
			<i class="grip"></i>
			<button class="txt"><span><u>D</u>raw</span><svg class="drop"><use href="#drop"/></svg></button>
			<button title="Select objects"><svg class="i16"><use href="#ptr"/></svg></button>
			<i class="sep"></i>
			<button class="txt"><span>A<u>u</u>toShapes</span><svg class="drop"><use href="#drop"/></svg></button>
			<button title="Line"><svg class="i16"><use href="#line"/></svg></button>
			<button title="Arrow"><svg class="i16"><use href="#arrow"/></svg></button>
			<button title="Rectangle"><svg class="i16"><use href="#rect"/></svg></button>
			<button title="Oval"><svg class="i16"><use href="#oval"/></svg></button>
			<button title="Text box"><svg class="i16"><use href="#tbox"/></svg></button>
			<button title="WordArt"><svg class="i16"><use href="#wordart"/></svg></button>
			<button title="Diagram"><svg class="i16"><use href="#diagram"/></svg></button>
			<button title="Clip art"><svg class="i16"><use href="#clip"/></svg></button>
			<button title="Picture"><svg class="i16"><use href="#pic"/></svg></button>
			<i class="sep"></i>
			<button title="Fill color"><svg class="i16"><use href="#fill"/></svg></button><button class="dd" title="Fill colors"><svg class="drop"><use href="#drop"/></svg></button>
			<button title="Line color"><svg class="i16"><use href="#linecol"/></svg></button><button class="dd" title="Line colors"><svg class="drop"><use href="#drop"/></svg></button>
			<button title="Font color"><svg class="i16"><use href="#fontcol"/></svg></button><button class="dd" title="Font colors"><svg class="drop"><use href="#drop"/></svg></button>
			<button title="Line style"><svg class="i16"><use href="#lstyle"/></svg></button>
			<button title="Dash style"><svg class="i16"><use href="#ldash"/></svg></button>
			<button title="Arrow style"><svg class="i16"><use href="#larrow"/></svg></button>
			<button title="Shadow style"><svg class="i16"><use href="#shadow"/></svg></button>
			<button class="over" title="Toolbar options"><span>&raquo;</span><svg class="drop"><use href="#drop"/></svg></button>
		</div>
	</div>
	<div class="wrow second">
		<div class="bar">
			<i class="grip"></i>
			<button title="Styles and formatting"><svg class="i16"><use href="#aa"/></svg></button>
			<span class="combo style"><select aria-label="Style"><option>Text + Bold, Ce</option></select><svg class="drop"><use href="#drop"/></svg></span>
			<span class="combo font"><select aria-label="Font"><option>Times New Roman</option></select><svg class="drop"><use href="#drop"/></svg></span>
			<span class="combo size"><select aria-label="Font size"><option>10</option></select><svg class="drop"><use href="#drop"/></svg></span>
			<i class="sep"></i>
			<button class="biu on" title="Bold"><b>B</b></button>
			<button class="biu" title="Italic"><em>I</em></button>
			<button class="biu" title="Underline"><u>U</u></button>
			<i class="sep"></i>
			<button title="Align left"><svg class="i16"><use href="#al"/></svg></button>
			<button class="on" title="Center"><svg class="i16"><use href="#ac"/></svg></button>
			<button title="Align right"><svg class="i16"><use href="#ar"/></svg></button>
			<button title="Justify"><svg class="i16"><use href="#aj"/></svg></button>
			<button title="Line spacing"><svg class="i16"><use href="#lspace"/></svg></button><button class="dd" title="Line spacings"><svg class="drop"><use href="#drop"/></svg></button>
			<i class="sep"></i>
			<button title="Numbering"><svg class="i16"><use href="#num"/></svg></button>
			<button title="Bullets"><svg class="i16"><use href="#bul"/></svg></button>
			<button title="Decrease indent"><svg class="i16"><use href="#outd"/></svg></button>
			<button title="Increase indent"><svg class="i16"><use href="#ind"/></svg></button>
			<i class="sep"></i>
			<button title="Borders"><svg class="i16"><use href="#border"/></svg></button><button class="dd" title="Border list"><svg class="drop"><use href="#drop"/></svg></button>
			<button title="Highlight"><svg class="i16"><use href="#hilite"/></svg></button><button class="dd" title="Highlight colors"><svg class="drop"><use href="#drop"/></svg></button>
			<button title="Font color"><svg class="i16"><use href="#fontcol"/></svg></button><button class="dd" title="Font colors"><svg class="drop"><use href="#drop"/></svg></button>
			<button class="over" title="Toolbar options"><svg class="drop"><use href="#drop"/></svg></button>
		</div>
		<div class="bar grow">
			<i class="grip"></i>
			<span class="combo markup"><select aria-label="Display for review"><option>Final Showing Markup</option></select><svg class="drop"><use href="#drop"/></svg></span>
			<button class="txt"><span><u>S</u>how</span><svg class="drop"><use href="#drop"/></svg></button>
			<i class="sep"></i>
			<button title="Previous change"><svg class="i16"><use href="#pchg"/></svg></button>
			<button title="Next change"><svg class="i16"><use href="#nchg"/></svg></button>
			<button title="Accept change"><svg class="i16"><use href="#accept"/></svg></button><button class="dd" title="Accept options"><svg class="drop"><use href="#drop"/></svg></button>
			<button class="over" title="Toolbar options"><span>&raquo;</span><svg class="drop"><use href="#drop"/></svg></button>
		</div>
	</div>
	<main class="wmain">
		<div class="wdoc">
			<div class="rulerrow">
				<button class="tabstop" title="Left tab">L</button>
				<svg id="hruler"></svg>
			</div>
			<div class="wpane">
				<svg id="vruler"></svg>
				<div class="desk"></div>
				<article class="page">
					<p class="top">compensation for their efforts. &nbsp;Instructions were given to submit only conversational English messages<br>
					that they have sent or received from their mobile phones. They were also asked to refrain from typing in<br>
					any repetitive messages. After filtering out the obvious noisy inputs, a total of 3,348 genuine SMS<br>
					messages were collected from 146 individuals. This large number of users contributing to the website<br>
					shows that messages were collected from a wide range of users and this gives sufficient breadth to the
					<span>corpus.</span></p>
					<p>Figure 3.1 shows the distribution of SMS messages collected in the corpus. Users P1 to P5 represent the<br>
					specific phone users whom we collected SMS messages from. We were unable to identify the remaining<br>
					phone users that we collected the messages from and so we are unable to show statistics of their<br>
					contributions in the figure. Users W1 to W45 represent those users that have contributed more than 25<br>
					messages at the website. The statistics of the website users who have contributed less than 25 messages are
					<span>not shown in the figure.</span></p>
					<h2 class="far"><span>4</span>A timing level model for SMS entry</h2>
					<p>Previous works in benchmarking the efficiency of text entry methods have concentrated on counting the<br>
					number of keystrokes by adapting the Keystroke Level Model (Card et al. 1983, Dunlop et al. 2000).<br>
					However, there are cognitive differences between the keystrokes made to compose an SMS message. &nbsp;For<br>
					example, predictive text entry should differentiate between keystrokes made to type out a word and ones<br>
					used to select between different words that are characterized by the same sequence. &nbsp;The latter may require
					<span>the user to check the screen to see whether the desired word correctly appears on the screen.</span></p>
					<p class="gap">We have subdivided keystrokes into several categories that we feel model these cognitive differences. &nbsp;We<br>
					then estimated the duration of each type of keystroke based on videotaping and timing of actual users<br>
					keying in SMS messages. &nbsp;We used these timings to find a model that minimizes the least squares error<br>
					between the actual observed timings over all subjects videotaped. &nbsp;We feel that this time level model<br>
					provides an evaluation model that is more accuracy with respect to real-world evaluation. &nbsp;We will provide
					<span>the categorization of different keystrokes and their timings in this model in the full paper.</span></p>
					<h2><span>5</span>Optimizing the keypad for text entry</h2>
				</article>
			</div>
			<div class="whscroll">
				<div class="views">
					<button title="Normal view"><svg class="i10 sq"><use href="#v1"/></svg></button>
					<button title="Web layout"><svg class="i10 sq"><use href="#v2"/></svg></button>
					<button title="Print layout" class="on"><svg class="i10 sq"><use href="#v3"/></svg></button>
					<button title="Outline"><svg class="i10 sq"><use href="#v4"/></svg></button>
					<button title="Reading"><svg class="i10 sq"><use href="#v5"/></svg></button>
				</div>
				<div class="hscroll"><button class="sb left" title="Scroll left"></button><div class="track"><div class="thumb"></div></div><button class="sb right" title="Scroll right"></button></div>
			</div>
		</div>
		<div class="vcol">
			<div class="vsplit"></div>
			<div class="vscroll"><button class="sb up" title="Scroll up"></button><div class="track"><div class="thumb"></div></div><button class="sb down" title="Scroll down"></button></div>
			<div class="browse">
				<button title="Previous page"><svg class="i10 sq"><use href="#prevpg"/></svg></button>
				<button class="ball" title="Browse object"></button>
				<button title="Next page"><svg class="i10 sq"><use href="#nextpg"/></svg></button>
			</div>
		</div>
	</main>
	<footer class="wstatus">
		<div class="cell wide"><span>Page&nbsp; 3</span><span>Sec&nbsp; 1</span><span>3/5</span></div>
		<div class="cell pos"><span>At&nbsp; 4.5"</span><span>Ln&nbsp; 23</span><span>Col&nbsp; 1</span></div>
		<button class="cell mode">REC</button><button class="cell mode">TRK</button><button class="cell mode">EXT</button><button class="cell mode">OVR</button>
		<div class="cell lang"><svg class="i22 low"><use href="#book"/></svg></div>
		<div class="cell blank"></div><div class="cell blank sm"></div><div class="cell blank sm"></div>
	</footer>
</section>

<!-- ======== taskbar ======== -->
<footer class="taskbar">
	<button class="start"><svg class="i18"><use href="#flag"/></svg>start</button>
	<div class="tasks">
		<button><svg class="i16"><use href="#ssh"/></svg>sf0 - default - SSH S...</button>
		<button class="pressed"><svg class="i16"><use href="#w"/></svg><b>2</b>Microsoft Office ...<svg class="drop"><use href="#drop"/></svg></button>
		<button><svg class="i16"><use href="#acro"/></svg>Adobe Acrobat Profe...</button>
		<button><svg class="i16"><use href="#ie"/></svg>Google Search: phon...</button>
	</div>
	<button class="mic" title="Microphone"><svg class="i16"><use href="#mic"/></svg></button>
	<div class="player">
		<svg class="i16"><use href="#flag"/></svg><i></i>
		<button class="sm" title="Menu"><svg class="pi"><use href="#p-menu"/></svg></button>
		<button title="Play"><svg class="pi"><use href="#p-play"/></svg></button>
		<button class="dim" title="Stop"><svg class="pi"><use href="#p-stop"/></svg></button>
		<button title="Previous"><svg class="pi"><use href="#p-prev"/></svg></button>
		<button title="Next"><svg class="pi"><use href="#p-next"/></svg></button>
		<button title="Mute"><svg class="pi"><use href="#p-vol"/></svg></button>
		<button class="sm" title="Volume"><svg class="pi"><use href="#p-menu"/></svg></button>
	</div>
	<div class="deskband"><svg class="i10 tall"><use href="#band"/></svg></div>
	<div class="tray"><button title="Show hidden icons"><svg class="i10 sq"><use href="#chev"/></svg></button><time>11:37 PM</time></div>
</footer>
</div>

<script src="script.js"></script>
</body>
</html>
```
FILE: styles.css
```css
* { box-sizing: border-box; }

html, body { height: 100%; }

body {
	margin: 0;
	display: flex;
	overflow: hidden;
	font-family: Roboto, "Liberation Sans", sans-serif;
	font-size: 11px;
	line-height: 14px;
	color: #000;
}

button, input, select {
	font: inherit;
	color: inherit;
	margin: 0;
	padding: 0;
	border: 0;
	background: none;
	border-radius: 0;
	white-space: nowrap;
}
button { display: flex; align-items: center; justify-content: center; flex: none; }

.gradients { position: absolute; width: 0; height: 0; }
.sprite { display: none; }
svg { flex: none; display: block; }
.i10 { width: 10px; height: 16px; }
.i10.sq { height: 10px; }
.i10.low { height: 8px; }
.i10.tall { height: 24px; }
.i14 { width: 14px; height: 14px; }
.i14.tall { height: 16px; }
.i16 { width: 16px; height: 16px; }
.i17 { width: 17px; height: 12px; }
.i18 { width: 18px; height: 18px; }
.i20 { width: 20px; height: 20px; }
.i20.thin { width: 18px; }
.i22 { width: 22px; height: 18px; }
.i22.low { height: 14px; }
.drop { width: 5px; height: 3px; }

.window {
	display: flex;
	flex-direction: column;
	min-width: 0;
	min-height: 0;
}
.acrobat {
	flex: 1 1 50%;
	background: #ece9d8;
	border-right: 3px solid #a8bbea;
}
.rightside {
	flex: 1 1 50%;
	min-width: 0;
	display: flex;
	flex-direction: column;
}
.word { flex: 1; background: #ece9d8; }

/* title bars */
.titlebar {
	display: flex;
	align-items: center;
	height: 26px;
	flex: none;
	padding: 0 1px 0 3px;
	gap: 3px;
}
.titlebar h1 {
	flex: 1;
	margin: 0;
	font-family: "Open Sans", "Liberation Sans", sans-serif;
	font-size: 13px;
	line-height: 18px;
	font-weight: 700;
	white-space: nowrap;
}
.inactive {
	background: linear-gradient(#9db9f0, #7b98e0 20%, #7b98e0 50%, #82a7ea 80%, #7d9fe4);
	margin-right: -3px;
	padding-right: 3px;
}
.inactive h1 { color: #d8e4f8; }
.active {
	background: linear-gradient(#3a8cf5, #0a5be8 12%, #0053e0 35%, #0064fc 70%, #0066ff 85%, #0048d0);
	color: #fff;
}
.active h1 { text-shadow: 1px 1px 0 #0b1f8c; }
.winbtns { display: flex; gap: 2px; }
.winbtn {
	width: 21px;
	height: 21px;
	border: 1px solid #fff;
	border-radius: 3px;
	background: linear-gradient(135deg, #8fb0f8, #3b6be4 45%, #2456d8);
	color: #fff;
	font-size: 15px;
}
.winbtn.close { background: linear-gradient(135deg, #f0a088, #dc4e2c 45%, #c03a18); }
.inactive .winbtn { border-color: #b9cbf4; background: #4a74e4; }
.inactive .winbtn.close { background: #b06a86; }
.min { align-items: flex-end; justify-content: flex-start; }
.min::after { content: ""; width: 7px; height: 3px; margin: 0 0 4px 4px; background: currentColor; }
.restore::after {
	content: "";
	width: 7px;
	height: 6px;
	margin: 3px 3px 0 0;
	border: 1px solid currentColor;
	border-top-width: 2px;
	box-shadow: 3px -3px 0 -1px #5b86ea, 3px -3px 0 0 currentColor;
}

/* menus */
.menubar { display: flex; align-items: center; flex: none; }
.menubar > button { padding: 0 6px; height: 18px; display: block; }
.gray { height: 20px; padding: 0 1px 0 5px; color: #aca899; }
.mdi { margin-left: auto; display: flex; gap: 2px; color: #c9c6b6; }
.mdibtn { width: 17px; height: 17px; background: #efede2; font-size: 11px; font-weight: bold; }
.gray .min::after { height: 2px; }
.gray .restore::after { box-shadow: 2px -2px 0 -1px #efede2, 2px -2px 0 0 currentColor; }

.word .menubar {
	height: 24px;
	padding: 0 4px 0 5px;
	background: linear-gradient(90deg, #9ebef5, #c4dafa 60%);
}
.word .menubar > button { padding: 0 7px; }
.word .menubar > button.closedoc { padding: 0 4px; margin-left: 5px; font-weight: bold; }
.ask {
	margin-left: auto;
	display: flex;
	align-items: center;
	width: 148px;
	height: 18px;
	background: #fff;
}
.ask input { flex: 1; min-width: 0; padding: 0 0 0 3px; font-size: 11px; }
.ask input::placeholder { color: #808080; opacity: 1; }
.ask .drop { margin: 0 4px; }

/* acrobat toolbars */
.arow {
	display: flex;
	flex: none;
	height: 31px;
	border-top: 1px solid #aca899;
	box-shadow: inset 0 1px 0 #fff;
}
.arow.second { height: 33px; border-bottom: 2px solid #8f8c7c; }
.agroup {
	display: flex;
	align-items: center;
	gap: 12px;
	padding: 0 8px 0 15px;
	border-right: 1px solid #aca899;
	position: relative;
}
.agroup + .agroup { box-shadow: inset 1px 1px 0 #fff; }
.agroup::before {
	content: "";
	position: absolute;
	left: 3px;
	top: 6px;
	bottom: 5px;
	width: 3px;
	background: repeating-linear-gradient(#aca899 0 1px, #f8f7f0 1px 2px);
}
.agroup button { gap: 4px; }
.agroup .drop { margin-left: 7px; }
.agroup.menus { padding-left: 17px; }
.off { color: #aca899; }
.tight { gap: 6px; padding-right: 6px; }
.zooms { gap: 13px; padding-right: 11px; }
.split { display: flex; gap: 1px; }
.split .on {
	height: 27px;
	background: #fff;
	border: 1px solid #8fa9bd;
	border-radius: 3px;
	padding: 0 4px;
}
.split .on .drop { margin: 0; }
.zoombox { display: flex; align-items: center; }
.zoombox input { width: 60px; height: 17px; margin-left: 10px; background: #fff; padding: 0 1px; font-size: 12px; }
.zoombox .drop { margin-left: 6px; }

/* acrobat body */
.amain { flex: 1; min-height: 0; display: flex; border-left: 2px solid #8f8c7c; border-bottom: 1px solid #000; }
.tabs {
	width: 20px;
	display: flex;
	flex-direction: column;
	padding: 6px 0 95px 2px;
	background: #cbc7b8;
	border-right: 1px solid #000;
}
.tab {
	position: relative;
	z-index: 0;
	padding: 13px 0 16px;
	background: #000;
	clip-path: polygon(0 9px, 9px 0, 100% 0, 100% 100%, 0 100%);
}
.tab::before {
	content: "";
	position: absolute;
	z-index: -1;
	inset: 1px 0 1px 1px;
	background: linear-gradient(#ece9d8, #ece9d8) no-repeat, #2a5ec0;
	background-size: 100% calc(100% - 6px), auto;
	clip-path: polygon(0 9px, 9px 0, 100% 0, 100% 100%, 0 100%);
}
.tab::after {
	content: "";
	position: absolute;
	left: 3px;
	right: 2px;
	bottom: 3px;
	height: 1px;
	background: repeating-linear-gradient(90deg, #cfe0ff 0 1px, transparent 1px 3px);
}
.tab > * { writing-mode: vertical-rl; transform: rotate(180deg); }
.tab.big { padding-top: 21px; }
.tab.big, .tab.big::before { clip-path: polygon(0 17px, 17px 0, 100% 0, 100% 100%, 0 100%); }
.tab.end { margin-top: auto; padding-bottom: 20px; }
.splitter {
	width: 6px;
	background: linear-gradient(90deg, #fff, #ece9d8 50%, #aca899);
	border-right: 1px solid #000;
	display: flex;
	align-items: center;
}
.splitter i { width: 6px; height: 27px; background: #2a5ec0; border: solid #000; border-width: 1px 0; }
.apane { flex: 1; min-width: 0; display: flex; flex-direction: column; background: #fff; }
.pdf { flex: 1; min-height: 0; overflow: hidden; padding-left: 40px; font: 22px/38px "Liberation Serif", "Times New Roman", serif; }
.pdf p { margin: -21px 0 0; white-space: nowrap; }
.pdf figure { margin: 50px 0 0; }
.pdf figure svg { margin-left: 6px; }
.pdf figcaption { margin-top: 14px; }
.ahscroll { display: flex; height: 17px; border-top: 1px solid #000; background: #ece9d8; }
.resize { width: 17px; border-right: 1px solid #aca899; }
.pagesize { width: 91px; text-align: center; line-height: 17px; }

/* scroll bars */
.hscroll { flex: 1; min-width: 0; display: flex; background: #f7f6f0; }
.vscroll { flex: 1; min-height: 0; display: flex; flex-direction: column; background: #f7f6f0; width: 17px; }
.track { flex: 1; min-width: 0; min-height: 0; display: flex; }
.hscroll .track { padding: 0 2px; }
.vscroll .track { flex-direction: column; }
.sb {
	width: 16px;
	height: 16px;
	border: 1px solid #fff;
	border-radius: 3px;
	background: linear-gradient(135deg, #d6e1fc, #b0c5f8);
	box-shadow: inset 0 0 0 1px #b8caf5;
}
.sb::after {
	content: "";
	width: 6px;
	height: 6px;
	border: solid #4d6185;
	border-width: 2px 0 0 2px;
}
.sb.left::after { transform: rotate(-45deg); margin-left: 3px; }
.sb.right::after { transform: rotate(135deg); margin-right: 3px; }
.sb.up::after { transform: rotate(45deg); margin-top: 3px; }
.sb.down::after { transform: rotate(225deg); margin-bottom: 3px; }
.thumb {
	display: flex;
	align-items: center;
	justify-content: center;
	border: 1px solid #98b4e8;
	border-radius: 2px;
	background: linear-gradient(#cbdafd, #b9cdfa);
	box-shadow: inset 1px 1px 0 #fff;
}
.hscroll .thumb::after {
	content: "";
	width: 8px;
	height: 7px;
	background: repeating-linear-gradient(90deg, #eef4fe 0 1px, #8cb0f8 1px 2px);
}
.ahscroll .thumb { width: 61%; margin-left: 20%; }
.whscroll .thumb { width: 95%; }
.vcol { flex: none; display: flex; flex-direction: column; background: #ece9d8; }
.vsplit { height: 8px; border: 1px solid #8f8c7c; border-width: 0 1px 1px 0; }
.pagemenu { width: 16px; height: 18px; border: solid #000; border-width: 0 1px 1px 0; }
.acrobat .vcol .thumb { height: 8px; }
.acrobat .vcol .track { padding-top: 105px; }
.corner { height: 17px; border-top: 1px solid #000; background: #d3cfc7; }

/* acrobat status */
.astatus { display: flex; align-items: center; height: 27px; flex: none; padding: 0 7px 0 398px; }
.pager { display: flex; align-items: center; gap: 9px; height: 18px; border-left: 1px solid #8f8c7c; border-right: 1px solid #8f8c7c; padding: 0 10px; }
.pager button:first-child { margin-right: 5px; }
.pager button:last-child { margin-left: 5px; }
.pager input { width: 107px; height: 17px; background: #fff; text-align: center; font-size: 12px; }
.history { border-left: 0; gap: 6px; padding-right: 7px; }
.history button:first-child { margin: 0; }
.layouts { margin-left: auto; display: flex; align-items: center; gap: 7px; }
.layouts .on { width: 27px; height: 23px; border: 1px solid #8fa9bd; border-radius: 3px; background: #fff; }
.layouts button:last-child { margin-left: 5px; }

/* word toolbars */
.wrow {
	display: flex;
	gap: 3px;
	flex: none;
	height: 26px;
	padding: 1px 0 1px 3px;
	background: linear-gradient(90deg, #9ebef5, #c4dafa 60%);
}
.wrow.second { border-bottom: 1px solid #7c7a70; height: 27px; }
.bar {
	display: flex;
	align-items: center;
	height: 24px;
	border-radius: 3px;
	background: linear-gradient(#dfebfd, #c6dafa 45%, #8fb2ea 90%, #6e93d2);
}
.bar.grow { flex: 1; }
.grip {
	width: 3px;
	height: 14px;
	margin: 0 0 0 4px;
	background: repeating-linear-gradient(#27418c 0 2px, transparent 2px 4px);
}
.bar button { width: 23px; height: 22px; }
.bar button.dd { width: 11px; }
.bar button.txt { width: auto; padding: 0 5px 0 3px; gap: 3px; }
.bar .sep { width: 6px; height: 18px; background: linear-gradient(90deg, transparent 2px, #6a8ccb 2px 3px, #fff 3px 4px, transparent 4px); }
.bar button.on { background: #ffc16f; border: 1px solid #00007c; }
.bar button.over {
	width: 11px;
	height: 24px;
	margin-left: auto;
	flex-direction: column;
	justify-content: space-between;
	padding: 1px 0 4px;
	border-radius: 0 3px 3px 0;
	background: linear-gradient(#76a0ea, #2a57b4 60%, #002c8c);
	color: #fff;
}
.bar .over .drop { margin-top: auto; fill: #fff; }
.bar:not(.grow) .over { margin-left: 7px; }
.wrow.second .bar:not(.grow) .over { margin-left: 3px; }
.biu { font-family: "Liberation Serif", serif; font-size: 16px; }
.biu u, .biu em { font-weight: bold; }
.combo { display: grid; height: 18px; background: #fff; margin-right: 2px; }
.combo > * { grid-area: 1 / 1; }
.combo select { appearance: none; width: 100%; min-width: 0; padding: 0 12px 0 2px; font-size: 11px; outline: 0; }
.combo .drop {
	justify-self: end;
	align-self: stretch;
	width: 12px;
	height: 18px;
	padding: 8px 4px 7px 3px;
	background: #d0e0fa;
	pointer-events: none;
}
.combo.style { width: 90px; }
.combo.font { width: 111px; }
.combo.size { width: 36px; }
.combo.markup { width: 136px; }
.combo.size select, .combo.markup select { font-size: 12px; }

/* word body */
.wmain { flex: 1; min-height: 0; display: flex; border-left: 1px solid #7c7a70; padding-right: 3px; }
.wdoc { flex: 1; min-width: 0; display: flex; flex-direction: column; }
.rulerrow { display: flex; height: 25px; background: #d8e7fc; padding-left: 4px; }
.tabstop { width: 17px; height: 16px; margin: 3px 5px 0 0; border: 1px solid #4a74c8; background: #fff; font-weight: 900; font-size: 10px; }
#hruler { flex: 1; height: 25px; min-width: 0; overflow: hidden; }
#hruler text, #vruler text { font: 10px Roboto, sans-serif; text-anchor: middle; }
.wpane { flex: 1; min-height: 0; display: flex; overflow: hidden; background: #fff; }
#vruler { width: 25px; height: 100%; background: #d8e7fc; }
.desk { width: 24px; background: #9099ae; border-right: 1px solid #000; }
.page { padding-left: 143px; font: 16px "Liberation Serif", "Times New Roman", serif; line-height: 1.15; }
.page p { margin: 0; width: 690px; text-align: justify; text-align-last: justify; }
.page p span { display: block; text-align-last: left; }
.page p.top { margin-top: -8px; }
.page p.gap { margin-top: 18px; }
.page h2 { margin: 18px 0; font-size: 21px; line-height: 24px; }
.page h2.far { margin-top: 36px; }
.page h2 span { display: inline-block; width: 36px; }
.whscroll { display: flex; height: 17px; background: #ece9d8; padding-top: 1px; }
.views { display: flex; margin: 0 1px 0 0; }
.views button { width: 17px; height: 16px; }
.views .on { background: #ffc16f; border: 1px solid #00007c; }
.word .vcol .track { padding: 285px 0 0; }
.word .vcol .thumb { height: 54px; margin-right: 1px; }
.word .vcol .vsplit { height: 6px; }
.browse { height: 69px; display: flex; flex-direction: column; align-items: center; gap: 2px; }
.browse button { height: 15px; }
.ball::after { content: ""; width: 7px; height: 7px; border-radius: 50%; border: 1px solid #333; background: #b9b7aa; }

/* word status */
.wstatus { display: flex; align-items: center; gap: 5px; height: 21px; flex: none; padding: 1px 5px 0; border-top: 1px solid #fff; font-size: 12px; }
.cell { height: 17px; border: 1px solid #cfccbd; display: flex; align-items: center; padding: 0 4px; }
.cell.wide { width: 188px; justify-content: space-between; padding-right: 23px; }
.cell.pos { width: 162px; justify-content: space-between; padding: 0 26px 0 3px; }
.mode { color: #aca899; padding: 0 2px; width: 26px; font-size: 11px; }
.lang { width: 44px; justify-content: center; }
.blank { width: 37px; }
.blank.sm { width: 28px; }

/* taskbar */
.taskbar {
	display: flex;
	align-items: stretch;
	flex: none;
	height: 30px;
	background: linear-gradient(#4a8cf2, #2a63dc 12%, #245edb 50%, #2158d4 90%, #1a44a8);
	color: #fff;
	font-size: 12px;
}
.start {
	width: 97px;
	gap: 5px;
	padding-right: 16px;
	border-radius: 0 8px 10px 0;
	background: linear-gradient(#5eac56, #3c9838 20%, #3c9a3a 60%, #2f7f2e);
	box-shadow: inset -2px 0 3px #1f5f1f;
	font: italic bold 18px "Open Sans", sans-serif;
	text-shadow: 1px 1px 1px #123;
}
.tasks { flex: 1; max-width: 642px; display: flex; gap: 3px; padding: 3px 0 1px 10px; }
.tasks button {
	flex: 1;
	min-width: 0;
	overflow: hidden;
	justify-content: flex-start;
	gap: 4px;
	padding-left: 9px;
	border-radius: 3px;
	background: linear-gradient(#5c9af8, #3c7ff0 20%, #3a7cee 80%, #3070e0);
}
.tasks .pressed { background: #1e52b7; box-shadow: inset 1px 1px 2px #12357c; }
.tasks b { color: #ffc04a; }
.tasks .drop { fill: #fff; margin: 0 4px 0 auto; }
.mic { margin: 0 2px 0 8px; }
.player {
	display: flex;
	align-items: center;
	gap: 1px;
	margin: 3px 0 2px;
	padding: 0 3px;
	background: linear-gradient(#c4d8f8, #7ea4e4 50%, #a8c4f4);
}
.player i { width: 1px; height: 16px; background: #6488c8; margin: 0 3px; }
.player button {
	width: 19px;
	height: 19px;
	border: 1px solid #7494cc;
	border-radius: 50%;
	background: radial-gradient(#fff, #b4c8ec);
	fill: #2c4c84;
}
.player .sm { width: 15px; height: 15px; }
.player .dim { fill: #a4b4cc; }
.pi { width: 9px; height: 9px; }
.deskband { width: 12px; margin: 3px 4px 2px 2px; background: #4a7ce0; display: flex; justify-content: center; }
.tray {
	margin-left: auto;
	flex: none;
	width: 75px;
	display: flex;
	align-items: center;
	gap: 6px;
	background: linear-gradient(#3cb4f4, #1290e4 20%, #0f90ea 80%, #0c74c4);
	border-left: 1px solid #0c3c8c;
}
.tray button { width: 17px; height: 17px; margin-left: -9px; border: 1px solid #a4d4fc; border-radius: 50%; background: #2a80ec; }
```
FILE: script.js
```js
var NS = 'http://www.w3.org/2000/svg';

function add(parent, name, attrs, text)
{
	var el = document.createElementNS(NS, name);
	for (var k in attrs) el.setAttribute(k, attrs[k]);
	if (text !== undefined) el.textContent = text;
	parent.appendChild(el);
	return el;
}

function hline(svg, x1, x2, y, color)
{
	add(svg, 'rect', {x: x1, y: y, width: x2 - x1, height: 1, fill: color});
}

function vline(svg, x, y1, y2, color)
{
	add(svg, 'rect', {x: x, y: y1, width: 1, height: y2 - y1, fill: color});
}

// messages per user: P1-P5, then W1-W45
var messages = [775, 740, 345, 223, 127,
	177, 177, 170, 145, 142, 128, 106, 100, 100, 100, 99, 96, 92, 92, 91,
	90, 83, 80, 80, 80, 76, 76, 76, 76, 76, 76, 61, 58, 58, 47,
	47, 43, 43, 43, 36, 36, 33, 29, 29, 29, 29, 29, 26, 26, 26];

function drawChart()
{
	var svg = document.getElementById('chart');
	var left = 87, right = 838, top = 27, bottom = 276, i;
	var sans = 'Liberation Sans, Arial, sans-serif';
	var unit = (bottom - top) / 900;
	var step = (right - left) / messages.length;

	add(svg, 'rect', {x: 0.5, y: 0.5, width: 849, height: 370, fill: '#fff', stroke: '#000'});
	for (i = 0; i <= 9; i++) {
		var y = Math.round(bottom - i * 100 * unit);
		hline(svg, left - 5, left, y, '#000');
		hline(svg, left, right, y, i == 9 ? '#808080' : '#000');
		add(svg, 'text', {x: left - 13, y: y + 5, 'text-anchor': 'end', 'font-family': sans, 'font-size': 16, fill: '#222'}, i * 100);
	}
	vline(svg, right, top, bottom, '#808080');
	vline(svg, left, top, bottom, '#000');

	messages.forEach(function (n, i) {
		var x = Math.round(left + i * step), h = Math.round(n * unit);
		add(svg, 'rect', {x: x + 4.5, y: bottom - h + 0.5, width: 6, height: h, fill: '#9999ff', stroke: '#000'});
		vline(svg, x, bottom, bottom + 6, '#000');
		if (i % 2 == 0) {
			var name = i < 5 ? 'P' + (i + 1) : 'W' + (i - 4);
			add(svg, 'text', {transform: 'translate(' + (x + 13) + ',' + (bottom + 15) + ') rotate(-90)', 'text-anchor': 'end', 'font-family': sans, 'font-size': 16}, name);
		}
	});
	vline(svg, right, bottom, bottom + 6, '#000');

	add(svg, 'text', {transform: 'translate(34,153) rotate(-90)', 'text-anchor': 'middle', 'font-family': sans, 'font-size': 17, 'font-weight': 'bold'}, 'Number of SMS messages');
	add(svg, 'text', {x: 463, y: 347, 'text-anchor': 'middle', 'font-family': sans, 'font-size': 17, 'font-weight': 'bold'}, 'User');
	// text cursor
	vline(svg, 47, 16, 38, '#000');
}

var INCH = 115;

function drawHRuler()
{
	var svg = document.getElementById('hruler');
	var zero = 167, end = 858, i;
	add(svg, 'rect', {x: 25, y: 5, width: 3000, height: 13, fill: '#9ebef5'});
	add(svg, 'rect', {x: zero, y: 5, width: end - zero, height: 13, fill: '#fff'});
	for (i = -10; i <= 56; i++) {
		var x = Math.round(zero + i * INCH / 8);
		if (i == 0 || i == 48) continue;
		if (i % 8 == 0) add(svg, 'text', {x: x, y: 15}, Math.abs(i / 8));
		else if (i % 4 == 0) vline(svg, x, 9, 14, '#000');
		else add(svg, 'rect', {x: x, y: 11, width: 1, height: 2, fill: '#000'});
		if (i % 4 == 0 && i > 0 && i < 48) vline(svg, x, 19, 22, '#808080');
	}
	add(svg, 'path', {d: 'M162.5 2.5h8v3l-4 4.5 4 4.5v3h-8v-3l4-4.5-4-4.5zM162.5 18.5h8v5h-8z', fill: '#ece9d8', stroke: '#000'});
	add(svg, 'path', {d: 'M852.5 16.5v-3l4-4 4 4v3z', fill: '#ece9d8', stroke: '#000'});
}

function drawVRuler()
{
	var svg = document.getElementById('vruler');
	add(svg, 'rect', {x: 5, y: 0, width: 15, height: 3000, fill: '#fff'});
	for (var i = 14; i <= 53; i++) {
		var y = Math.round(-191 + i * INCH / 8);
		if (i % 8 == 0) add(svg, 'text', {transform: 'translate(16,' + y + ') rotate(-90)'}, i / 8);
		else if (i % 4 == 0) hline(svg, 10, 15, y, '#000');
		else hline(svg, 11, 13, y, '#000');
	}
}

drawChart();
drawHRuler();
drawVRuler();
```
